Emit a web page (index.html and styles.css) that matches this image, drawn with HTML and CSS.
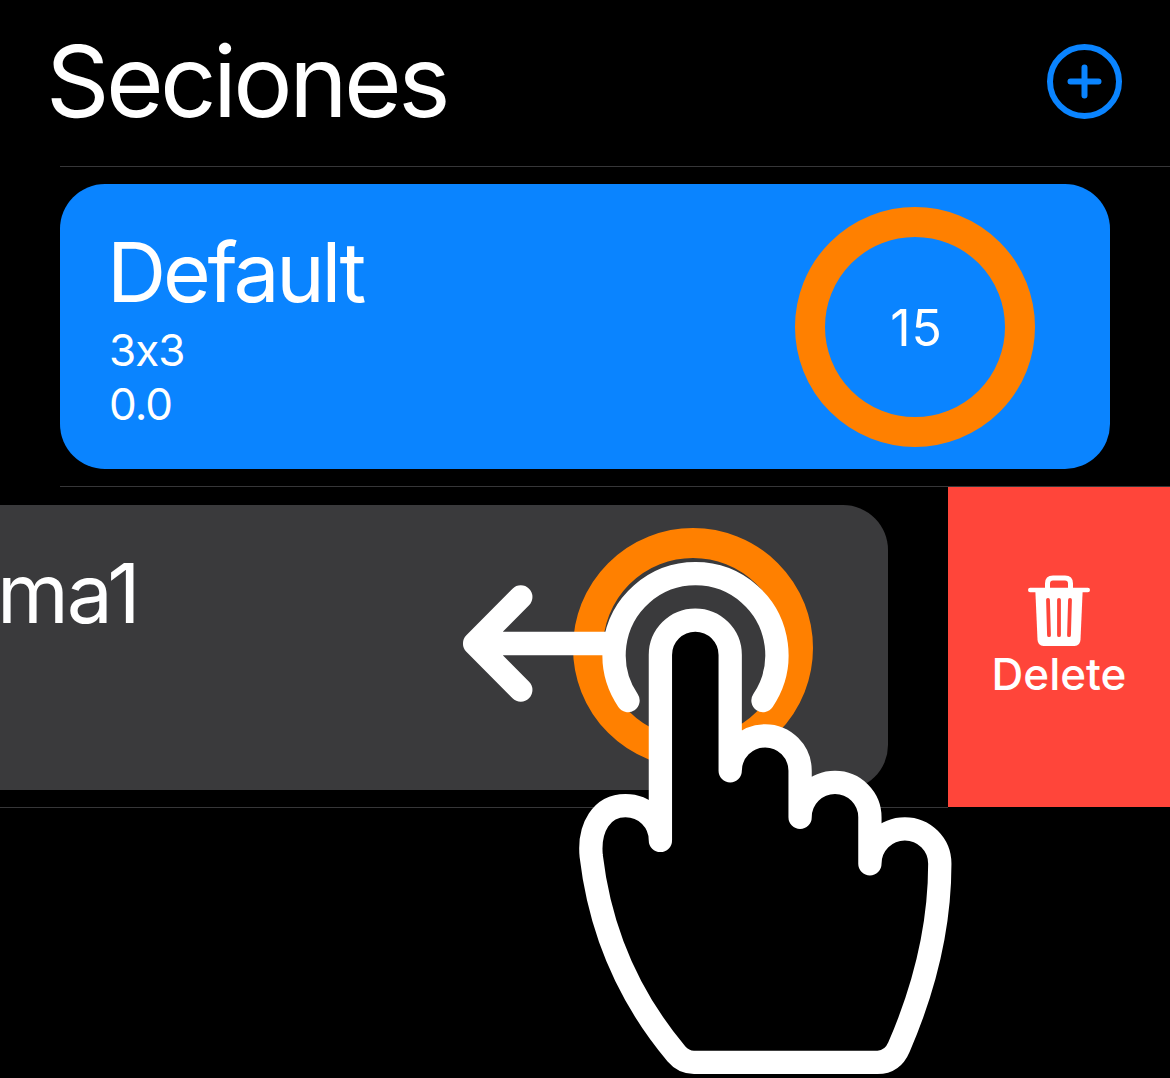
FILE: index.html
```html
<!DOCTYPE html>
<html lang="es">
<head>
<meta charset="utf-8">
<title>Seciones</title>
<link rel="stylesheet" href="styles.css">
</head>
<body>
<main class="screen">
  <header class="header">
    <h1 class="title">Seciones</h1>
    <svg class="add" viewBox="0 0 76 76" aria-label="+">
      <circle cx="37.500" cy="37.500" r="34.500"/>
      <path d="M37.500 23.500v28M23.500 37.500h28"/>
    </svg>
  </header>
  <section class="row">
    <article class="card">
      <div class="info">
        <h2 class="name">Default</h2>
        <p class="meta">3x3</p>
        <p class="meta">0.0</p>
      </div>
      <div class="ring"><span class="count">15</span></div>
    </article>
  </section>
  <section class="row-swiped">
    <div class="swiped-content">
      <article class="card card-swiped">
        <h2 class="name">ma1</h2>
        <div class="ring"></div>
      </article>
    </div>
    <div class="delete">
      <svg class="trash" viewBox="0 0 62 72">
        <path class="trash-lid" d="M2.200 15h57.600"/>
        <path class="trash-handle" d="M19.500 14.500V8.500q0-5.500 5.500-5.500h12q5.500 0 5.500 5.500V14.500"/>
        <path class="trash-can" d="M7.300 15h47.400L52.500 64.500q-.4 6.500-6 6.500h-31q-5.600 0-6-6.500z"/>
        <path class="trash-slot" d="M20 24.800l1 35.400M31 24.800v35.400M42 24.800l-1 35.400"/>
      </svg>
      <span class="delete-label">Delete</span>
    </div>
  </section>
  <svg class="gesture" viewBox="0 0 1170 1078">
    <path d="M610 643.500H474.600M520.800 597L474.600 643.500L520.800 690"/>
    <path d="M628 700.500A81.400 81.400 0 1 1 763 700.500"/>
    <path class="hand" d="M660.400 840.400V655a34.900 34.900 0 0 1 69.800 0V770.800a34.900 34.900 0 0 1 69.900 0V817.300a34.900 34.900 0 0 1 69.800 0V863.800a34.900 34.900 0 0 1 69.900 0C939.800 925 925 987 899 1047Q892.500 1062.300 877.500 1062.300H694Q683.500 1062.300 676.500 1054C632 1001 600.500 935 591.200 856C588.500 827 602 805.700 625.500 805.700C645 805.700 660.400 821 660.400 840.400Z"/>
  </svg>
</main>
</body>
</html>
```
FILE: styles.css
```css
* { box-sizing: border-box; }
body { margin: 0; background: #000; color: #fff; font-family: Inter, "Liberation Sans", sans-serif; }
h1, h2, p { margin: 0; font-weight: 400; }
.screen { position: relative; width: 1170px; height: 1078px; overflow: hidden; }
.header { display: flex; justify-content: space-between; align-items: center; height: 166px; padding: 0 47px 3px 46px; }
.title { padding-bottom: 2px; font-size: 99px; line-height: 120px; letter-spacing: -3.600px; }
.add { width: 76px; height: 76px; fill: none; stroke: #0a84ff; stroke-width: 6; stroke-linecap: round; }
.row { height: 320px; margin-left: 60px; padding-top: 17px; border-top: 1px solid #363638; }
.card { display: flex; justify-content: space-between; align-items: flex-start; width: 1050px; height: 285px; padding: 23px 75px 0 49px; border-radius: 45px; background: #0a84ff; }
.info { padding-top: 16px; }
.name { margin-left: -2px; font-size: 82px; line-height: 100px; letter-spacing: -3.200px; }
.meta { font-size: 44px; line-height: 54px; letter-spacing: -1px; }
.ring { display: flex; align-items: center; justify-content: center; width: 240px; height: 240px; border: 30px solid #ff8000; border-radius: 50%; }
.count { padding: 2px 0 0 3px; font-size: 50px; line-height: 60px; letter-spacing: 1px; }
.row-swiped { display: flex; align-items: flex-start; background: linear-gradient(#363638, #363638) 60px 0 / 1110px 1px no-repeat; }
.swiped-content { width: 948px; height: 322px; padding-top: 19px; border-bottom: 1px solid #363638; }
.card-swiped { width: 888px; padding-left: 0; border-radius: 0 45px 45px 0; background: #3a3a3c; }
.card-swiped .name { padding-top: 16px; margin-left: 0; letter-spacing: -2.200px; text-indent: -3px; }
.delete { display: flex; flex-direction: column; align-items: center; width: 222px; height: 320px; margin-top: 1px; padding-top: 88px; background: #ff453a; }
.trash { width: 62px; height: 72px; fill: none; stroke: #fff; stroke-linecap: round; }
.trash-lid { stroke-width: 4.400px; }
.trash-handle { stroke-width: 5px; stroke-linecap: butt; }
.trash-can { fill: #fff; stroke: none; }
.trash-slot { stroke: #ff453a; stroke-width: 3.800px; }
.delete-label { font-size: 44px; line-height: 54px; font-weight: 500; }
.gesture { position: absolute; inset: 0; width: 1170px; height: 1078px; fill: none; stroke: #fff; stroke-width: 23.300px; stroke-linecap: round; stroke-linejoin: round; pointer-events: none; }
.hand { fill: #000; }
```
